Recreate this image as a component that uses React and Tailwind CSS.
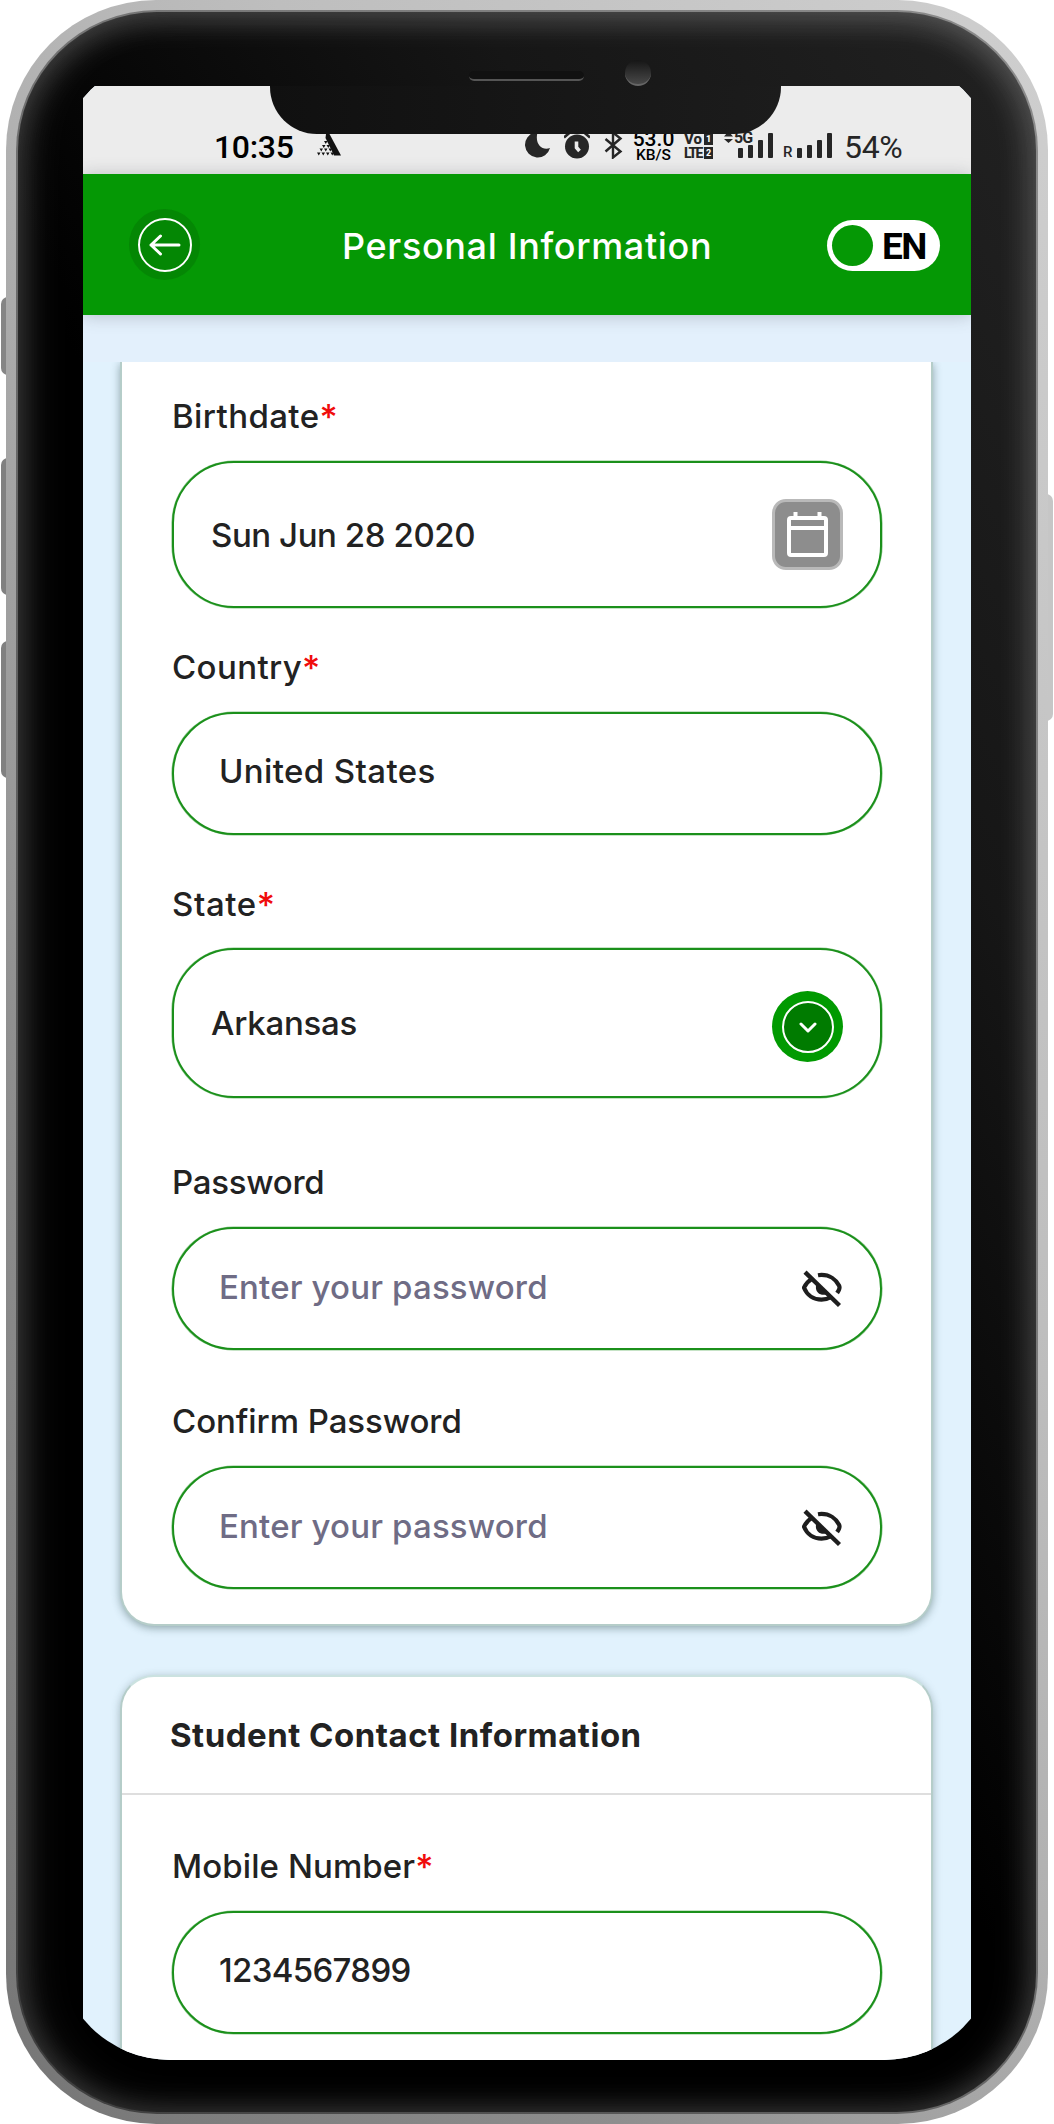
import React from "react";

function Label({ children, required, className = "" }) {
  return (
    <div className={`flex h-10 text-[33px] leading-10 font-[450] whitespace-nowrap ${className}`}>
      <span>{children}</span>
      {required && <span className="text-[35px] leading-[42px] font-medium tracking-normal text-[#f00c0c]">*</span>}
    </div>
  );
}

function Field({ children, icon, className = "" }) {
  return (
    <div
      className={`flex items-center justify-between rounded-[62px] border-2 border-[#1b901b] bg-white text-[33px] leading-10 font-[450] whitespace-nowrap shadow-[0_0_0_0.6px_rgba(27,144,27,0.5)] ${className}`}
    >
      <span>{children}</span>
      {icon}
    </div>
  );
}

function EyeOff() {
  return (
    <svg className="mt-[6px] h-10 w-10" viewBox="0 0 40 40" fill="none" stroke="#1e1e1e" strokeWidth="4.2">
      <path d="M16 5.2c1.200-.2 2.300-.3 3.500-.3 8 0 14.500 4.500 17.500 10.600.7 1.400.7 2.800 0 4.200-.5 1-1.200 2.200-1.900 3.300" />
      <path d="M10 8.800C6.500 10.900 3.800 13.800 2 17.700c3 7.500 9.700 11.900 17.500 11.900 3.400 0 6.600-.8 9.400-2.400" />
      <path d="M3 2.200 37.500 35.500" strokeWidth="4.400" />
      <path d="M14.500 14.200 25 24.200c-3.200 1.300-7 .6-9-1.500-2.200-2.200-2.700-5.500-1.500-8.500Z" fill="#1e1e1e" stroke="none" />
    </svg>
  );
}

function CalendarButton() {
  return (
    <span className="flex size-[71px] items-center justify-center rounded-[14px] border-[3px] border-[#b9b9b9] bg-[#8d8d8d]">
      <svg className="h-[45px] w-[41px]" viewBox="0 0 41 45" fill="none" stroke="#fff" strokeWidth="4">
        <rect x="2" y="6" width="37" height="37" rx="2" />
        <path d="M2 16h37M8.500 0v6M32.500 0v6" />
      </svg>
    </span>
  );
}

function ChevronButton() {
  return (
    <span className="mt-[8px] flex size-[71px] items-center justify-center rounded-full bg-[#019a01]">
      <span className="flex size-[52px] items-center justify-center rounded-full border-2 border-white bg-[#007b00]">
        <svg className="h-[12px] w-[18px]" viewBox="0 0 18 12" fill="none" stroke="#fff" strokeWidth="3" strokeLinecap="round" strokeLinejoin="round">
          <path d="M2 3l7 7 7-7" />
        </svg>
      </span>
    </span>
  );
}

function Bars({ heights }) {
  return (
    <span className="flex h-[25px] items-end gap-[5px]">
      {heights.map((h, i) => (
        <span key={i} className={`w-[5px] rounded-[1px] bg-[#262626] ${h}`} />
      ))}
    </span>
  );
}

function StatusBar() {
  return (
    <div className="flex h-[88px] items-end bg-[#ececec] font-['Roboto'] text-[#262626]">
      <span className="mb-[7px] ml-[131px] w-[80px] text-[32px] leading-10 font-medium tracking-[-0.01em] text-black">10:35</span>
      <svg className="mb-[18px] ml-[23px] h-[22px] w-[24px]" viewBox="0 0 24 22" fill="#111">
        <path d="M9 0h3.500L24 21.500h-7L8.500 4z" />
        <path d="M7 7h3.500L8.800 10zM5 11h3.500L6.800 14zM9.500 11H13l-1.700 3zM2.500 14.500H6L4.300 17.500zM7 14.500h3.500l-1.700 3zM11.500 14.500H15l-1.700 3zM0 18.500h3.500L1.800 21.500zM4.500 18.500H8l-1.700 3zM9 18.500h3.500l-1.700 3zM13.500 18.500H17l-1.700 3z" />
      </svg>

      <svg className="mb-[16px] ml-[184px] h-[26px] w-[26px]" viewBox="0 0 26 26" fill="#262626">
        <path d="M9.500 0.500A12.700 12.700 0 1 0 25 16C17 19 9.500 12 12.500 0.500Z" />
      </svg>
      <svg className="mb-[15px] ml-[13px] h-[28px] w-[26px]" viewBox="0 0 26 28">
        <circle cx="13" cy="15.500" r="12" fill="#262626" />
        <path d="M0 6.500 6.500 1M26 6.500 19.500 1" stroke="#262626" strokeWidth="2.600" fill="none" />
        <path d="M12.500 10.500v6l3 3.500" stroke="#ececec" strokeWidth="3.600" fill="none" />
      </svg>
      <svg className="mb-[15px] ml-[14px] h-[28px] w-[19px]" viewBox="0 0 19 28" fill="none" stroke="#262626" strokeWidth="2.400">
        <path d="M1.500 8l15 12.500L9 26.500v-25L16.500 7.500 1.500 20.500" />
      </svg>
      <span className="mb-[12px] ml-[10px] flex w-[41px] flex-col items-center whitespace-nowrap text-black">
        <span className="text-[21px] leading-[18px] font-medium">53.0</span>
        <span className="text-[15.500px] leading-[14px] font-medium">KB/S</span>
      </span>
      <span className="mb-[15px] ml-[10px] flex flex-col gap-[2px] text-[14px] leading-[12px] font-extrabold">
        <span className="flex h-[12px] items-center justify-between gap-[2px]">
          <span className="w-[18px] text-[15px]">Vo</span>
          <span className="flex h-[12px] w-[9px] items-center justify-center bg-[#262626] text-[9px] text-white">1</span>
        </span>
        <span className="flex h-[12px] items-center justify-between gap-[2px]">
          <span className="w-[18px] tracking-[-0.12em]">LTE</span>
          <span className="flex h-[12px] w-[9px] items-center justify-center bg-[#262626] text-[9px] text-white">2</span>
        </span>
      </span>
      <span className="relative mb-[16px] ml-[25px] flex">
        <Bars heights={["h-[10px]", "h-[13px]", "h-[18px]", "h-[25px]"]} />
        <span className="absolute top-[-2px] left-[-14px] flex items-center gap-px bg-[#ececec] text-[16px] leading-[13px] font-bold tracking-[-0.06em]">
          <svg className="h-[10px] w-[9px]" viewBox="0 0 9 10" fill="#262626">
            <path d="M0 3.500h9L6 0H3zM0 6h9L4.500 10z" />
          </svg>
          5G
        </span>
      </span>
      <span className="mb-[14px] ml-[10px] w-[9px] text-[15px] leading-[15px] font-medium">R</span>
      <span className="mb-[16px] ml-[5px] flex">
        <Bars heights={["h-[10px]", "h-[13px]", "h-[18px]", "h-[25px]"]} />
      </span>
      <span className="mb-[7px] ml-[12px] text-[32px] leading-10 tracking-[-0.01em]">54%</span>
    </div>
  );
}

function Header() {
  return (
    <div className="relative z-10 flex h-[141px] items-center bg-[#059805] shadow-[0_1px_16px_rgba(60,70,80,0.28)]">
      <span className="ml-[46px] flex size-[71px] items-center justify-center rounded-full bg-[#048704]">
        <span className="flex size-[54px] items-center justify-center rounded-full border-2 border-white">
          <svg className="h-[22px] w-[32px]" viewBox="0 0 32 22" fill="none" stroke="#fff" strokeWidth="3" strokeLinecap="round" strokeLinejoin="round">
            <path d="M30 11H2M11.500 2 2 11l9.500 9" />
          </svg>
        </span>
      </span>
      <h1 className="mt-[2px] ml-[142px] w-[370px] text-[36px] leading-10 font-[450] tracking-[0.018em] whitespace-nowrap text-white">
        Personal Information
      </h1>
      <span className="mt-px ml-[115px] flex h-[51px] w-[113px] items-center rounded-full bg-white pl-[5px] font-['Roboto'] text-[37px] leading-[51px] font-bold tracking-[-0.04em] text-black">
        <span className="mr-[9px] size-[41px] rounded-full bg-[#059805]" />
        <span className="pt-[2px]">EN</span>
      </span>
    </div>
  );
}

export default function App() {
  return (
    <main className="relative h-[2124px] w-[1054px] overflow-hidden bg-white font-['Inter',sans-serif] text-[#222222]">
      {/* Hardware buttons */}
      <span className="absolute top-[297px] left-px h-[78px] w-[12px] rounded-l-[7px] bg-[#858585]" />
      <span className="absolute top-[458px] left-px h-[137px] w-[12px] rounded-l-[7px] bg-[#808080]" />
      <span className="absolute top-[641px] left-px h-[137px] w-[12px] rounded-l-[7px] bg-[#808080]" />
      <span className="absolute top-[494px] right-px h-[227px] w-[12px] rounded-r-[7px] bg-[#c6c6c6]" />

      {/* Metal frame and bezel */}
      <div className="relative ml-[6px] h-[2124px] w-[1042px] rounded-[150px] bg-[linear-gradient(60deg,#757575_0%,#8e8e8e_27%,#b0b0b0_50%,#bebebe_66%,#cfcfcf_100%)] px-[10px] pt-[10px] pb-[10px]">
        <div className="h-[2104px] rounded-[141px] bg-[linear-gradient(60deg,#3c3c3c,#777777_60%,#8c8c8c)] p-[2px]">
          <div className="h-[2100px] rounded-[139px] bg-[linear-gradient(60deg,#000_0%,#000_48%,#161616_75%,#222_100%)] px-[65px] pt-[74px] shadow-[inset_12px_0_40px_rgba(255,255,255,0.1),inset_-8px_0_36px_rgba(255,255,255,0.13),inset_0_8px_36px_rgba(255,255,255,0.13)]">
            {/* Screen */}
            <div className="relative h-[1974px] overflow-hidden bg-[#e1f2fd] [clip-path:inset(-29px_-25px_0px_-25px_round_112px)]">
              <StatusBar />
              <Header />

              <div className="h-[47px] bg-[#e3f0fc]" />
              <div className="h-[1698px] overflow-hidden pr-[38px] pl-[37px]">
                <section className="h-[1264px] rounded-b-[34px] border-x-2 border-b-2 border-[#b5cdc9] bg-white pr-[49px] pl-[50px] pt-[34px] shadow-[0_2px_8px_rgba(40,70,70,0.45)]">
                  <Label required className="tracking-[0.012em]">Birthdate</Label>
                  <Field className="mt-[25px] h-[147px] pr-[37px] pl-[37px] tracking-[-0.013em]" icon={<CalendarButton />}>
                    Sun Jun 28 2020
                  </Field>
                  <Label required className="mt-[39px] tracking-[0.012em]">Country</Label>
                  <Field className="mt-[25px] h-[123px] pb-[6px] pl-[45px] tracking-[0.012em]">United States</Field>
                  <Label required className="mt-[49px] tracking-[0.018em]">State</Label>
                  <Field className="mt-[24px] h-[150px] pr-[37px] pb-px pl-[37px] tracking-[-0.007em]" icon={<ChevronButton />}>
                    Arkansas
                  </Field>
                  <Label className="mt-[64px] tracking-[-0.008em]">Password</Label>
                  <Field className="mt-[25px] h-[123px] pr-[38px] pb-[3px] pl-[45px] tracking-[0.005em] text-[#6f6c85]" icon={<EyeOff />}>
                    Enter your password
                  </Field>
                  <Label className="mt-[51px] tracking-[-0.002em]">Confirm Password</Label>
                  <Field className="mt-[25px] h-[123px] pr-[38px] pb-[3px] pl-[45px] tracking-[0.005em] text-[#6f6c85]" icon={<EyeOff />}>
                    Enter your password
                  </Field>
                </section>

                <section className="mt-[49px] h-[480px] rounded-t-[34px] border-x-2 border-t-2 border-x-[#b5cdc9] border-t-[#cbe2e0] bg-white shadow-[0_2px_8px_rgba(40,70,70,0.35)]">
                  <h2 className="h-[118px] border-b-2 border-[#dedede] pt-[38px] pl-[48px] text-[33px] leading-10 font-bold tracking-[0.015em] whitespace-nowrap">
                    Student Contact Information
                  </h2>
                  <div className="pt-[51px] pr-[49px] pl-[50px]">
                    <Label required className="tracking-[0.003em]">Mobile Number</Label>
                    <Field className="mt-[25px] h-[123px] pb-[5px] pl-[45px] tracking-[-0.02em]">1234567899</Field>
                  </div>
                </section>
              </div>
            </div>
          </div>
        </div>

        {/* Notch with speaker and camera */}
        <div className="absolute top-[70px] left-[264px] h-[64px] w-[511px] rounded-b-[47px] bg-[linear-gradient(90deg,#101010,#1c1c1c)] [clip-path:inset(16px_0_0_0)]" />
        <span className="absolute top-[71px] left-[463px] h-[10px] w-[115px] rounded-full border-b-2 border-[#555] bg-[#111]" />
        <span className="absolute top-[60px] left-[619px] size-[26px] rounded-full border-b-2 border-[#666] bg-[linear-gradient(#161616,#484848)]" />
      </div>
    </main>
  );
}
